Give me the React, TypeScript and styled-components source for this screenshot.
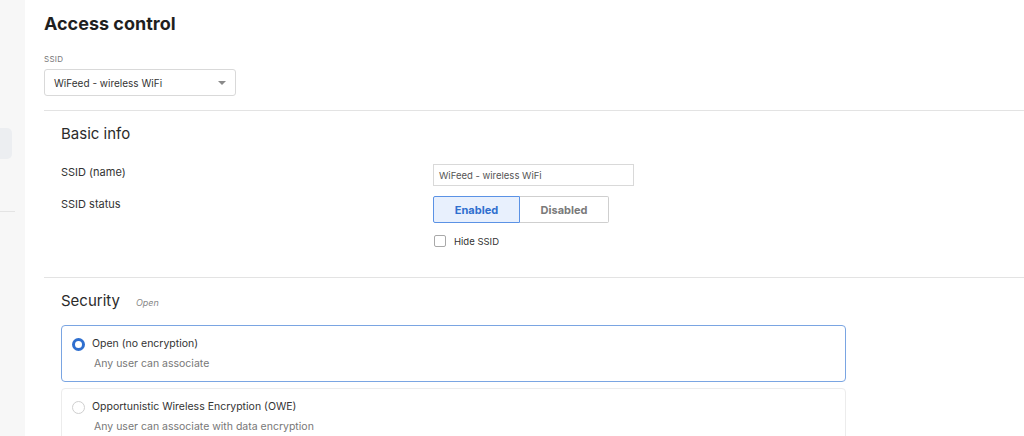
import React from 'react'
import styled, { createGlobalStyle } from 'styled-components'

const GlobalStyle = createGlobalStyle`
  html, body {
    margin: 0;
    padding: 0;
    background: #fff;
    font-family: Inter, "Noto Sans", sans-serif;
    color: #333;
  }
  * { box-sizing: border-box; }
`

const Page = styled.div`
  display: flex;
  width: 100%;
  height: 436px;
  overflow: hidden;
`

const Sidebar = styled.aside`
  flex: 0 0 25px;
  background: #f7f7f7;
  padding-top: 128px;
`

const SideItem = styled.div`
  width: 12px;
  height: 31px;
  background: #eceef1;
  border-radius: 0 5px 5px 0;
`

const SideDivider = styled.div`
  width: 15px;
  margin-top: 52px;
  border-top: 1px solid #e4e4e4;
`

const Main = styled.main`
  flex: 1;
  padding: 12px 0 0 19px;
`

const Title = styled.h1`
  margin: 0;
  font-size: 18px;
  line-height: 24px;
  font-weight: 700;
  color: #1f1f1f;
`

const FieldLabel = styled.div`
  margin-top: 18px;
  font-size: 8px;
  line-height: 10px;
  letter-spacing: 0.3px;
  color: #777;
  text-transform: uppercase;
`

const Select = styled.div`
  margin-top: 5px;
  width: 192px;
  height: 27px;
  border: 1px solid #d9d9d9;
  border-radius: 3px;
  display: flex;
  align-items: center;
  justify-content: space-between;
  padding: 0 9px 0 9px;
  font-size: 10px;
  color: #333;
`

const Caret = styled.span`
  width: 0;
  height: 0;
  border-left: 4px solid transparent;
  border-right: 4px solid transparent;
  border-top: 4px solid #8a8a8a;
`

const Section = styled.section<{ $top: number }>`
  margin-top: ${p => p.$top}px;
  border-top: 1px solid #e3e3e3;
  padding: 12px 0 0 17px;
`

const SectionHead = styled.div`
  display: flex;
  align-items: baseline;
  gap: 16px;
`

const SectionTitle = styled.h2`
  margin: 0;
  font-size: 15px;
  line-height: 21px;
  font-weight: 400;
  color: #2b2b2b;
`

const SectionHint = styled.span`
  font-size: 9px;
  font-style: italic;
  color: #888;
`

const Row = styled.div<{ $top: number }>`
  display: flex;
  align-items: flex-start;
  margin-top: ${p => p.$top}px;
`

const RowLabel = styled.div`
  flex: 0 0 372px;
  font-size: 11px;
  line-height: 16px;
  color: #333;
`

const TextInput = styled.div`
  width: 201px;
  height: 22px;
  border: 1px solid #d9d9d9;
  padding: 0 5px;
  display: flex;
  align-items: center;
  font-size: 9.5px;
  color: #555;
`

const Toggle = styled.div`
  display: flex;
`

const ToggleButton = styled.div<{ $active?: boolean }>`
  width: ${p => (p.$active ? 87 : 89)}px;
  height: 27px;
  display: flex;
  align-items: center;
  justify-content: center;
  font-size: 11px;
  font-weight: 700;
  background: ${p => (p.$active ? '#e8f0fd' : '#fff')};
  color: ${p => (p.$active ? '#2f6fcf' : '#7a7a7a')};
  border: 1px solid ${p => (p.$active ? '#5b92e5' : '#cfcfcf')};
  border-left-width: ${p => (p.$active ? 1 : 0)}px;
  border-radius: ${p => (p.$active ? '2px 0 0 2px' : '0 2px 2px 0')};
`

const CheckRow = styled.label`
  display: flex;
  align-items: center;
  gap: 8px;
  margin: 12px 0 0 373px;
  font-size: 9.5px;
  color: #333;
`

const CheckBox = styled.span`
  width: 12px;
  height: 12px;
  border: 1px solid #a9a9a9;
  border-radius: 2px;
  background: #fff;
`

const Options = styled.div`
  display: flex;
  flex-direction: column;
  gap: 6px;
  margin-top: 14px;
`

const OptionCard = styled.div<{ $selected?: boolean }>`
  width: 785px;
  height: 57px;
  border: 1px solid ${p => (p.$selected ? '#7aa5e2' : '#ececec')};
  border-radius: 4px;
  padding: 10px 10px 9px 10px;
  display: grid;
  grid-template-columns: 12px 1fr;
  column-gap: 8px;
  row-gap: 3px;
  align-items: center;
`

const Radio = styled.span<{ $checked?: boolean }>`
  width: 13px;
  height: 13px;
  border-radius: 50%;
  background: #fff;
  border: ${p => (p.$checked ? '3.5px solid #2f6fcf' : '1px solid #cfcfcf')};
`

const OptionTitle = styled.div`
  font-size: 10.5px;
  line-height: 16px;
  color: #333;
`

const OptionSub = styled.div`
  grid-column: 2;
  padding-left: 2px;
  font-size: 10.5px;
  line-height: 16px;
  color: #777;
`

const options = [
  { title: 'Open (no encryption)', sub: 'Any user can associate', selected: true },
  { title: 'Opportunistic Wireless Encryption (OWE)', sub: 'Any user can associate with data encryption' },
]

export default function App() {
  return (
    <>
      <GlobalStyle />
      <Page>
        <Sidebar>
          <SideItem />
          <SideDivider />
        </Sidebar>
        <Main>
          <Title>Access control</Title>
          <FieldLabel>SSID</FieldLabel>
          <Select>
            <span>WiFeed - wireless WiFi</span>
            <Caret />
          </Select>

          <Section $top={14}>
            <SectionTitle>Basic info</SectionTitle>
            <Row $top={20}>
              <RowLabel>SSID (name)</RowLabel>
              <TextInput>WiFeed - wireless WiFi</TextInput>
            </Row>
            <Row $top={10}>
              <RowLabel>SSID status</RowLabel>
              <Toggle>
                <ToggleButton $active>Enabled</ToggleButton>
                <ToggleButton>Disabled</ToggleButton>
              </Toggle>
            </Row>
            <CheckRow>
              <CheckBox />
              Hide SSID
            </CheckRow>
          </Section>

          <Section $top={30}>
            <SectionHead>
              <SectionTitle>Security</SectionTitle>
              <SectionHint>Open</SectionHint>
            </SectionHead>
            <Options>
              {options.map(o => (
                <OptionCard key={o.title} $selected={o.selected}>
                  <Radio $checked={o.selected} />
                  <OptionTitle>{o.title}</OptionTitle>
                  <OptionSub>{o.sub}</OptionSub>
                </OptionCard>
              ))}
            </Options>
          </Section>
        </Main>
      </Page>
    </>
  )
}
